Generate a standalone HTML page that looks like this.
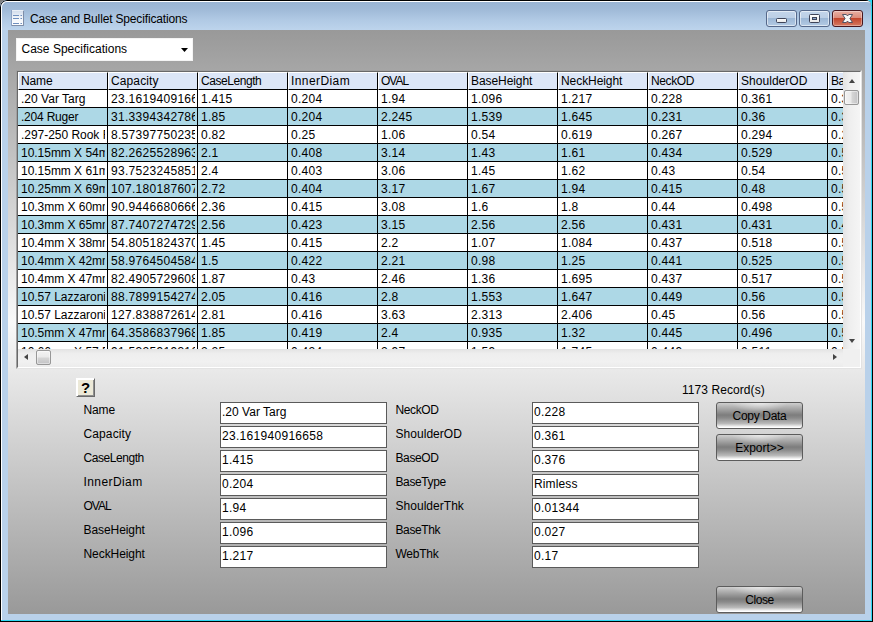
<!DOCTYPE html>
<html lang="en"><head><meta charset="utf-8"><title>Case and Bullet Specifications</title>
<style>
html,body{margin:0;padding:0;}
body{width:873px;height:622px;overflow:hidden;background:#000;font-family:"Liberation Sans",sans-serif;font-size:12px;color:#000;position:relative;}
.desk{position:absolute;left:0;top:0;width:873px;height:622px;background:linear-gradient(#2fd8f3,#2fd8f3) 868px 0/4px 5px no-repeat,linear-gradient(#808080,#808080) 0 0/5px 5px no-repeat,#000;}
.win{position:absolute;left:0;top:0;width:871px;height:620px;background:#b9d1ea;border-radius:7px 5px 0 0;box-shadow:1px 1px 0 0 #2fd8f3;overflow:hidden;}
.win:before{content:"";position:absolute;left:0;top:0;right:0;bottom:0;border-left:1px solid #000;border-top:1px solid #000;border-radius:7px 5px 0 0;z-index:5;pointer-events:none;}
.win:after{content:"";position:absolute;left:1px;top:1px;right:0;bottom:0;border-left:1px solid #fff;border-top:1px solid #fff;border-radius:6px 4px 0 0;z-index:5;pointer-events:none;}
.titlebar{position:absolute;left:0;top:0;width:871px;height:30px;background:linear-gradient(#98b3d2 0,#9fb9d7 30%,#b0c9e4 65%,#bdd4ec 100%);}
.icon{position:absolute;left:11px;top:10px;}
.title{position:absolute;left:30px;top:11px;height:16px;line-height:16px;font-size:12px;white-space:nowrap;}
.cb{position:absolute;top:10px;width:29px;height:15px;border:1px solid #55688a;border-radius:3px;box-shadow:inset 0 0 0 1px rgba(255,255,255,.55);background:linear-gradient(#c3d5ea 0,#bccfe6 46%,#9bb6d5 47%,#b3cae4 100%);}
.cmin{left:766px}.cmax{left:799px}
.ccls{left:832px;border-color:#47161e;background:linear-gradient(#e8b0a4 0,#dc8b7b 46%,#c1432a 47%,#d67a62 100%);box-shadow:inset 0 0 0 1px rgba(255,255,255,.35);}
.cmin i{position:absolute;left:9px;top:7px;width:9px;height:3px;border:1px solid #3f4458;border-radius:1.500px;background:linear-gradient(#fdfdfd,#e9e9e9);}
.cmax i{position:absolute;left:9px;top:3px;width:9px;height:7px;border:1px solid #3f4458;border-radius:1.500px;background:linear-gradient(#fdfdfd,#e9e9e9);}
.cmax b{position:absolute;left:2px;top:2px;width:3px;height:1px;border:1px solid #3f4458;background:#8aa6cc;}
.ccls svg{position:absolute;left:9px;top:3px;}
.client{position:absolute;left:8px;top:30px;width:857px;height:584px;background:linear-gradient(#999 0,#f9f9f9 50%,#999 100%);}
.combo{position:absolute;left:8px;top:8px;width:175px;height:21px;border:1px solid #f4f4f4;background:#fff;}
.combo span{position:absolute;left:4.500px;top:3px;line-height:14px;white-space:nowrap;}
.carr{position:absolute;left:164px;top:9px;width:7px;height:4px;}
.gridw{position:absolute;left:8px;top:40px;width:844px;height:297px;border:1px solid;border-color:#a0a0a0 #e3e3e3 #e3e3e3 #a0a0a0;}
.grid{position:absolute;left:0;top:0;width:842px;height:295px;border:1px solid;border-color:#696969 #fff #fff #696969;background:#fff;overflow:hidden;}
.ghead{position:absolute;left:0;top:0;height:18px;width:900px;white-space:nowrap;}
.hc{position:absolute;top:0;width:88px;height:16px;background:#dce6f7;border-top:1px solid #fff;border-left:1px solid #fff;border-right:1px solid #000;border-bottom:1px solid #000;overflow:hidden;}
.hc span{position:absolute;left:2px;top:1px;line-height:14px;white-space:nowrap;}
.gr{position:absolute;left:0;height:18px;width:900px;}
.gc{position:absolute;top:0;width:89px;height:17px;border-right:1px solid #000;border-bottom:1px solid #000;overflow:hidden;background:#fff;}
.alt .gc{background:#add8e6;}
.gc span{position:absolute;left:3px;top:2px;width:84px;overflow:hidden;line-height:14px;white-space:nowrap;letter-spacing:.3px;}
.gc.nm span{letter-spacing:-.03px;}
.vsb{position:absolute;left:825px;top:0;width:17px;height:277px;background:linear-gradient(90deg,#e3e3e3 0,#eeeeee 35%,#f5f5f5 100%);}
.hsb{position:absolute;left:0;top:277px;width:825px;height:18px;background:linear-gradient(#e3e3e3 0,#eeeeee 25%,#f1f1f1 70%,#ececec 100%);}
.corner{position:absolute;left:825px;top:277px;width:17px;height:18px;background:#f0f0f0;}
.vthumb{position:absolute;left:1px;top:18px;width:13px;height:13px;border:1px solid #979797;border-radius:2px;background:linear-gradient(90deg,#f3f3f3 0,#e9e9e9 48%,#d6d6d6 52%,#c3c3c5 100%);box-shadow:inset 0 0 0 1px rgba(255,255,255,.45);}
.hthumb{position:absolute;left:18px;top:1px;width:13px;height:13px;border:1px solid #979797;border-radius:2px;background:linear-gradient(#f3f3f3 0,#e9e9e9 48%,#d6d6d6 52%,#c3c3c5 100%);box-shadow:inset 0 0 0 1px rgba(255,255,255,.45);}
.aup,.adn,.alf,.art{position:absolute;width:0;height:0;}
.aup{left:6px;top:7px;border-left:3.500px solid transparent;border-right:3.500px solid transparent;border-bottom:4px solid #444;}
.adn{left:6px;top:267px;border-left:3.500px solid transparent;border-right:3.500px solid transparent;border-top:4px solid #444;}
.alf{left:6px;top:5px;border-top:3.500px solid transparent;border-bottom:3.500px solid transparent;border-right:4px solid #444;}
.art{left:815px;top:5px;border-top:3.500px solid transparent;border-bottom:3.500px solid transparent;border-left:4px solid #444;}
.help{position:absolute;left:68px;top:348px;width:17px;height:17px;background:#ece9d8;border:1px solid;border-color:#fff #6a6a6a #6a6a6a #fff;box-shadow:inset 1px 1px 0 #fff,inset -1px -1px 0 #8f8f8f;text-align:center;}
.help b{position:absolute;left:0;right:0;top:0;line-height:17px;font-size:15px;}
.count{position:absolute;left:674px;top:353px;line-height:14px;white-space:nowrap;}
.lbl{position:absolute;line-height:14px;white-space:nowrap;}
.tb{position:absolute;width:165px;height:20px;border:1px solid #5a5a5a;background:#fff;overflow:hidden;}
.tb span{position:absolute;left:1px;top:2px;line-height:14px;white-space:nowrap;letter-spacing:.3px;}
.btn{position:absolute;width:85px;height:25px;border:1px solid #5c5c5c;border-radius:3px;text-align:center;background:radial-gradient(ellipse 28px 9px at 50% 0,rgba(255,255,255,.55),rgba(255,255,255,0) 100%),linear-gradient(#cfcfcf 0,#b4b4b4 15%,#7d7d7d 48%,#8a8a8a 60%,#b9b9b9 82%,#fff 97%,#fff 100%);}
.btn span{position:absolute;left:0;right:0;top:6px;line-height:14px;white-space:nowrap;}
.gr.last .gc span{top:3px;}
</style></head>
<body>
<div class="desk"></div>
<div class="win">
<div class="titlebar"></div>
<svg class="icon" width="14" height="17" viewBox="0 0 14 17">
<defs><linearGradient id="ig" x1="0" y1="0" x2="0" y2="1"><stop offset="0" stop-color="#d3ddec"/><stop offset="0.5" stop-color="#f4f7fb"/><stop offset="1" stop-color="#ffffff"/></linearGradient></defs>
<rect x="1" y="1" width="12" height="15" fill="url(#ig)"/>
<rect x="0.5" y="0.5" width="12" height="15" fill="none" stroke="#8ea3c4" stroke-width="1"/>
<path d="M1 0.5H12.5" stroke="#e9eef6" stroke-width="1"/>
<path d="M12.5 1V15.5H1" stroke="#7f8ea8" stroke-width="1" fill="none"/>
<path d="M2 5.5H8M9.500 5.500H11M2 8.500H8M9.500 8.500H11M2 13.500H8M9.500 13.500H11" stroke="#6f8fbe" stroke-width="1"/>
</svg>
<div class="title" style="letter-spacing:-0.16px">Case and Bullet Specifications</div>
<div class="cb cmin"><i></i></div>
<div class="cb cmax"><i><b></b></i></div>
<div class="cb ccls"><svg width="11" height="9" viewBox="0 0 11 9"><path d="M0.500 0.500H4.300L5.500 2L6.700 0.500H10.500L7.900 4.500L10.500 8.500H6.700L5.500 7L4.300 8.500H0.500L3.100 4.500Z" fill="#f8f8f8" stroke="#454a5e" stroke-width="0.900" stroke-linejoin="round"/></svg></div>
<div class="client">
<div class="combo"><span style="letter-spacing:0.01px">Case Specifications</span><svg class="carr" viewBox="0 0 7 4"><path d="M0 0H7L3.500 4Z" fill="#000"/></svg></div>
<div class="gridw"><div class="grid">
<div class="ghead"><div class="hc" style="left:0px"><span style="letter-spacing:-0.13px">Name</span></div><div class="hc" style="left:90px"><span style="letter-spacing:0.11px">Capacity</span></div><div class="hc" style="left:180px"><span style="letter-spacing:-0.44px">CaseLength</span></div><div class="hc" style="left:270px"><span style="letter-spacing:0.42px">InnerDiam</span></div><div class="hc" style="left:360px"><span style="letter-spacing:-1.00px">OVAL</span></div><div class="hc" style="left:450px"><span style="letter-spacing:-0.07px">BaseHeight</span></div><div class="hc" style="left:540px"><span style="letter-spacing:-0.07px">NeckHeight</span></div><div class="hc" style="left:630px"><span style="letter-spacing:-0.40px">NeckOD</span></div><div class="hc" style="left:720px"><span style="letter-spacing:0.04px">ShoulderOD</span></div><div class="hc" style="left:810px"><span style="letter-spacing:-0.40px">BaseOD</span></div></div>
<div class="gr" style="top:18px"><div class="gc nm" style="left:0px"><span style="letter-spacing:0.02px">.20 Var Targ</span></div><div class="gc" style="left:90px"><span>23.161940916658</span></div><div class="gc" style="left:180px"><span>1.415</span></div><div class="gc" style="left:270px"><span>0.204</span></div><div class="gc" style="left:360px"><span>1.94</span></div><div class="gc" style="left:450px"><span>1.096</span></div><div class="gc" style="left:540px"><span>1.217</span></div><div class="gc" style="left:630px"><span>0.228</span></div><div class="gc" style="left:720px"><span>0.361</span></div><div class="gc" style="left:810px"><span>0.376</span></div></div>
<div class="gr alt" style="top:36px"><div class="gc nm" style="left:0px"><span style="letter-spacing:-0.21px">.204 Ruger</span></div><div class="gc" style="left:90px"><span>31.339434278613</span></div><div class="gc" style="left:180px"><span>1.85</span></div><div class="gc" style="left:270px"><span>0.204</span></div><div class="gc" style="left:360px"><span>2.245</span></div><div class="gc" style="left:450px"><span>1.539</span></div><div class="gc" style="left:540px"><span>1.645</span></div><div class="gc" style="left:630px"><span>0.231</span></div><div class="gc" style="left:720px"><span>0.36</span></div><div class="gc" style="left:810px"><span>0.376</span></div></div>
<div class="gr" style="top:54px"><div class="gc nm" style="left:0px"><span>.297-250 Rook Rifle</span></div><div class="gc" style="left:90px"><span>8.5739775023553</span></div><div class="gc" style="left:180px"><span>0.82</span></div><div class="gc" style="left:270px"><span>0.25</span></div><div class="gc" style="left:360px"><span>1.06</span></div><div class="gc" style="left:450px"><span>0.54</span></div><div class="gc" style="left:540px"><span>0.619</span></div><div class="gc" style="left:630px"><span>0.267</span></div><div class="gc" style="left:720px"><span>0.294</span></div><div class="gc" style="left:810px"><span>0.295</span></div></div>
<div class="gr alt" style="top:72px"><div class="gc nm" style="left:0px"><span>10.15mm X 54mm R</span></div><div class="gc" style="left:90px"><span>82.262552896341</span></div><div class="gc" style="left:180px"><span>2.1</span></div><div class="gc" style="left:270px"><span>0.408</span></div><div class="gc" style="left:360px"><span>3.14</span></div><div class="gc" style="left:450px"><span>1.43</span></div><div class="gc" style="left:540px"><span>1.61</span></div><div class="gc" style="left:630px"><span>0.434</span></div><div class="gc" style="left:720px"><span>0.529</span></div><div class="gc" style="left:810px"><span>0.54</span></div></div>
<div class="gr" style="top:90px"><div class="gc nm" style="left:0px"><span>10.15mm X 61mm R</span></div><div class="gc" style="left:90px"><span>93.752324585112</span></div><div class="gc" style="left:180px"><span>2.4</span></div><div class="gc" style="left:270px"><span>0.403</span></div><div class="gc" style="left:360px"><span>3.06</span></div><div class="gc" style="left:450px"><span>1.45</span></div><div class="gc" style="left:540px"><span>1.62</span></div><div class="gc" style="left:630px"><span>0.43</span></div><div class="gc" style="left:720px"><span>0.54</span></div><div class="gc" style="left:810px"><span>0.545</span></div></div>
<div class="gr alt" style="top:108px"><div class="gc nm" style="left:0px"><span>10.25mm X 69mm R</span></div><div class="gc" style="left:90px"><span>107.18018760712</span></div><div class="gc" style="left:180px"><span>2.72</span></div><div class="gc" style="left:270px"><span>0.404</span></div><div class="gc" style="left:360px"><span>3.17</span></div><div class="gc" style="left:450px"><span>1.67</span></div><div class="gc" style="left:540px"><span>1.94</span></div><div class="gc" style="left:630px"><span>0.415</span></div><div class="gc" style="left:720px"><span>0.48</span></div><div class="gc" style="left:810px"><span>0.52</span></div></div>
<div class="gr" style="top:126px"><div class="gc nm" style="left:0px"><span>10.3mm X 60mm R</span></div><div class="gc" style="left:90px"><span>90.944668066631</span></div><div class="gc" style="left:180px"><span>2.36</span></div><div class="gc" style="left:270px"><span>0.415</span></div><div class="gc" style="left:360px"><span>3.08</span></div><div class="gc" style="left:450px"><span>1.6</span></div><div class="gc" style="left:540px"><span>1.8</span></div><div class="gc" style="left:630px"><span>0.44</span></div><div class="gc" style="left:720px"><span>0.498</span></div><div class="gc" style="left:810px"><span>0.515</span></div></div>
<div class="gr alt" style="top:144px"><div class="gc nm" style="left:0px"><span>10.3mm X 65mm R</span></div><div class="gc" style="left:90px"><span>87.740727472914</span></div><div class="gc" style="left:180px"><span>2.56</span></div><div class="gc" style="left:270px"><span>0.423</span></div><div class="gc" style="left:360px"><span>3.15</span></div><div class="gc" style="left:450px"><span>2.56</span></div><div class="gc" style="left:540px"><span>2.56</span></div><div class="gc" style="left:630px"><span>0.431</span></div><div class="gc" style="left:720px"><span>0.431</span></div><div class="gc" style="left:810px"><span>0.431</span></div></div>
<div class="gr" style="top:162px"><div class="gc nm" style="left:0px"><span>10.4mm X 38mm R</span></div><div class="gc" style="left:90px"><span>54.805182437025</span></div><div class="gc" style="left:180px"><span>1.45</span></div><div class="gc" style="left:270px"><span>0.415</span></div><div class="gc" style="left:360px"><span>2.2</span></div><div class="gc" style="left:450px"><span>1.07</span></div><div class="gc" style="left:540px"><span>1.084</span></div><div class="gc" style="left:630px"><span>0.437</span></div><div class="gc" style="left:720px"><span>0.518</span></div><div class="gc" style="left:810px"><span>0.544</span></div></div>
<div class="gr alt" style="top:180px"><div class="gc nm" style="left:0px"><span>10.4mm X 42mm R</span></div><div class="gc" style="left:90px"><span>58.976450458412</span></div><div class="gc" style="left:180px"><span>1.5</span></div><div class="gc" style="left:270px"><span>0.422</span></div><div class="gc" style="left:360px"><span>2.21</span></div><div class="gc" style="left:450px"><span>0.98</span></div><div class="gc" style="left:540px"><span>1.25</span></div><div class="gc" style="left:630px"><span>0.441</span></div><div class="gc" style="left:720px"><span>0.525</span></div><div class="gc" style="left:810px"><span>0.54</span></div></div>
<div class="gr" style="top:198px"><div class="gc nm" style="left:0px"><span>10.4mm X 47mm R</span></div><div class="gc" style="left:90px"><span>82.490572960831</span></div><div class="gc" style="left:180px"><span>1.87</span></div><div class="gc" style="left:270px"><span>0.43</span></div><div class="gc" style="left:360px"><span>2.46</span></div><div class="gc" style="left:450px"><span>1.36</span></div><div class="gc" style="left:540px"><span>1.695</span></div><div class="gc" style="left:630px"><span>0.437</span></div><div class="gc" style="left:720px"><span>0.517</span></div><div class="gc" style="left:810px"><span>0.52</span></div></div>
<div class="gr alt" style="top:216px"><div class="gc nm" style="left:0px"><span>10.57 Lazzaroni Maverick</span></div><div class="gc" style="left:90px"><span>88.789915427412</span></div><div class="gc" style="left:180px"><span>2.05</span></div><div class="gc" style="left:270px"><span>0.416</span></div><div class="gc" style="left:360px"><span>2.8</span></div><div class="gc" style="left:450px"><span>1.553</span></div><div class="gc" style="left:540px"><span>1.647</span></div><div class="gc" style="left:630px"><span>0.449</span></div><div class="gc" style="left:720px"><span>0.56</span></div><div class="gc" style="left:810px"><span>0.58</span></div></div>
<div class="gr" style="top:234px"><div class="gc nm" style="left:0px"><span>10.57 Lazzaroni Meteor</span></div><div class="gc" style="left:90px"><span>127.83887261413</span></div><div class="gc" style="left:180px"><span>2.81</span></div><div class="gc" style="left:270px"><span>0.416</span></div><div class="gc" style="left:360px"><span>3.63</span></div><div class="gc" style="left:450px"><span>2.313</span></div><div class="gc" style="left:540px"><span>2.406</span></div><div class="gc" style="left:630px"><span>0.45</span></div><div class="gc" style="left:720px"><span>0.56</span></div><div class="gc" style="left:810px"><span>0.58</span></div></div>
<div class="gr alt" style="top:252px"><div class="gc nm" style="left:0px"><span>10.5mm X 47mm R</span></div><div class="gc" style="left:90px"><span>64.358683796812</span></div><div class="gc" style="left:180px"><span>1.85</span></div><div class="gc" style="left:270px"><span>0.419</span></div><div class="gc" style="left:360px"><span>2.4</span></div><div class="gc" style="left:450px"><span>0.935</span></div><div class="gc" style="left:540px"><span>1.32</span></div><div class="gc" style="left:630px"><span>0.445</span></div><div class="gc" style="left:720px"><span>0.496</span></div><div class="gc" style="left:810px"><span>0.516</span></div></div>
<div class="gr last" style="top:270px"><div class="gc nm" style="left:0px"><span>10.66mm X 57 R</span></div><div class="gc" style="left:90px"><span>91.532591931612</span></div><div class="gc" style="left:180px"><span>2.25</span></div><div class="gc" style="left:270px"><span>0.424</span></div><div class="gc" style="left:360px"><span>2.97</span></div><div class="gc" style="left:450px"><span>1.59</span></div><div class="gc" style="left:540px"><span>1.745</span></div><div class="gc" style="left:630px"><span>0.449</span></div><div class="gc" style="left:720px"><span>0.511</span></div><div class="gc" style="left:810px"><span>0.533</span></div></div>
<div class="vsb"><i class="aup"></i><i class="vthumb"></i><i class="adn"></i></div>
<div class="hsb"><i class="alf"></i><i class="hthumb"></i><i class="art"></i></div>
<div class="corner"></div>
</div></div>
<div class="help"><b>?</b></div>
<div class="count" style="letter-spacing:0.07px">1173 Record(s)</div>
<div class="lbl" style="left:75.500px;top:373px;letter-spacing:-0.13px;">Name</div><div class="tb" style="left:212px;top:372px"><span style="letter-spacing:0.02px">.20 Var Targ</span></div>
<div class="lbl" style="left:75.500px;top:397px;letter-spacing:0.11px;">Capacity</div><div class="tb" style="left:212px;top:396px"><span>23.161940916658</span></div>
<div class="lbl" style="left:75.500px;top:421px;letter-spacing:-0.44px;">CaseLength</div><div class="tb" style="left:212px;top:420px"><span>1.415</span></div>
<div class="lbl" style="left:75.500px;top:445px;letter-spacing:0.42px;">InnerDiam</div><div class="tb" style="left:212px;top:444px"><span>0.204</span></div>
<div class="lbl" style="left:75.500px;top:469px;letter-spacing:-1.00px;">OVAL</div><div class="tb" style="left:212px;top:468px"><span>1.94</span></div>
<div class="lbl" style="left:75.500px;top:493px;letter-spacing:-0.07px;">BaseHeight</div><div class="tb" style="left:212px;top:492px"><span>1.096</span></div>
<div class="lbl" style="left:75.500px;top:517px;letter-spacing:-0.07px;">NeckHeight</div><div class="tb" style="left:212px;top:516px"><span>1.217</span></div>
<div class="lbl" style="left:387.500px;top:373px;letter-spacing:-0.40px;">NeckOD</div><div class="tb" style="left:524px;top:372px"><span>0.228</span></div>
<div class="lbl" style="left:387.500px;top:397px;letter-spacing:0.04px;">ShoulderOD</div><div class="tb" style="left:524px;top:396px"><span>0.361</span></div>
<div class="lbl" style="left:387.500px;top:421px;letter-spacing:-0.40px;">BaseOD</div><div class="tb" style="left:524px;top:420px"><span>0.376</span></div>
<div class="lbl" style="left:387.500px;top:445px;letter-spacing:-0.39px;">BaseType</div><div class="tb" style="left:524px;top:444px"><span style="letter-spacing:0.12px">Rimless</span></div>
<div class="lbl" style="left:387.500px;top:469px;letter-spacing:0.03px;">ShoulderThk</div><div class="tb" style="left:524px;top:468px"><span>0.01344</span></div>
<div class="lbl" style="left:387.500px;top:493px;letter-spacing:-0.40px;">BaseThk</div><div class="tb" style="left:524px;top:492px"><span>0.027</span></div>
<div class="lbl" style="left:387.500px;top:517px;letter-spacing:-0.25px;">WebThk</div><div class="tb" style="left:524px;top:516px"><span>0.17</span></div>
<div class="btn" style="left:708px;top:372px"><span style="letter-spacing:-0.32px">Copy Data</span></div>
<div class="btn" style="left:708px;top:404px"><span>Export&gt;&gt;</span></div>
<div class="btn" style="left:708px;top:556px"><span style="letter-spacing:-0.46px">Close</span></div>
</div>
</div>
</body></html>
